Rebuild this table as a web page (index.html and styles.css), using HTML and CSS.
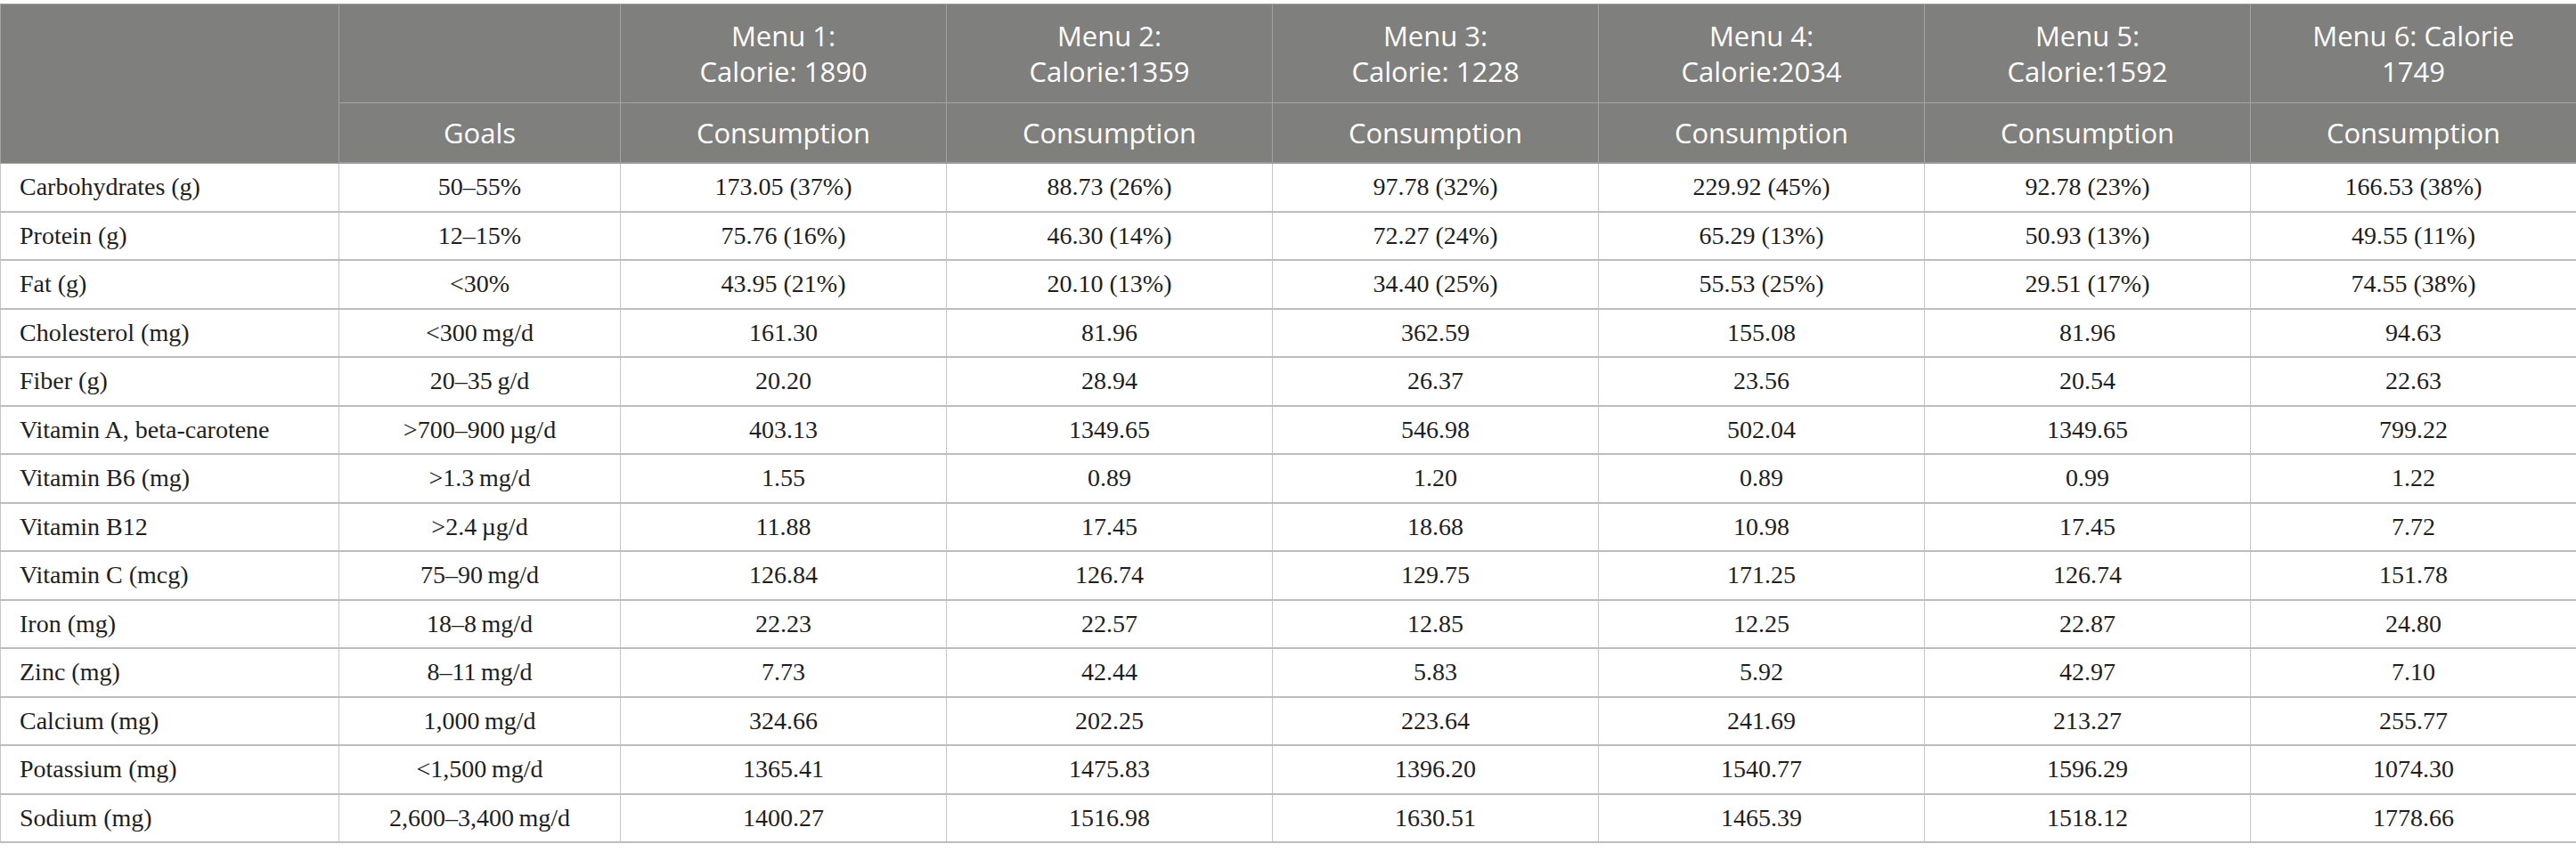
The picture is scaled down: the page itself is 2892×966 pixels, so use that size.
FILE: index.html
```html
<!DOCTYPE html>
<html lang="en">
<head>
  <meta charset="UTF-8">
  <title>Menu nutrient consumption</title>
  <link rel="stylesheet" href="styles.css">
</head>
<body>

  <table class="nutrients">
    <colgroup>
      <col class="col-name">
      <col class="col-goal">
      <col class="col-menu" span="6">
    </colgroup>
    <thead>
      <tr class="head-menus">
        <th rowspan="2"></th>
        <th></th>
        <th>Menu 1:<br>Calorie: 1890</th>
        <th>Menu 2:<br>Calorie:1359</th>
        <th>Menu 3:<br>Calorie: 1228</th>
        <th>Menu 4:<br>Calorie:2034</th>
        <th>Menu 5:<br>Calorie:1592</th>
        <th>Menu 6: Calorie<br>1749</th>
      </tr>
      <tr class="head-cols">
        <th>Goals</th>
        <th>Consumption</th>
        <th>Consumption</th>
        <th>Consumption</th>
        <th>Consumption</th>
        <th>Consumption</th>
        <th>Consumption</th>
      </tr>
    </thead>
    <tbody>
      <tr><td>Carbohydrates (g)</td><td>50–55%</td><td>173.05 (37%)</td><td>88.73 (26%)</td><td>97.78 (32%)</td><td>229.92 (45%)</td><td>92.78 (23%)</td><td>166.53 (38%)</td></tr>
      <tr><td>Protein (g)</td><td>12–15%</td><td>75.76 (16%)</td><td>46.30 (14%)</td><td>72.27 (24%)</td><td>65.29 (13%)</td><td>50.93 (13%)</td><td>49.55 (11%)</td></tr>
      <tr><td>Fat (g)</td><td>&lt;30%</td><td>43.95 (21%)</td><td>20.10 (13%)</td><td>34.40 (25%)</td><td>55.53 (25%)</td><td>29.51 (17%)</td><td>74.55 (38%)</td></tr>
      <tr><td>Cholesterol (mg)</td><td>&lt;300&#8201;mg/d</td><td>161.30</td><td>81.96</td><td>362.59</td><td>155.08</td><td>81.96</td><td>94.63</td></tr>
      <tr><td>Fiber (g)</td><td>20–35&#8201;g/d</td><td>20.20</td><td>28.94</td><td>26.37</td><td>23.56</td><td>20.54</td><td>22.63</td></tr>
      <tr><td>Vitamin A, beta-carotene</td><td>&gt;700–900&#8201;µg/d</td><td>403.13</td><td>1349.65</td><td>546.98</td><td>502.04</td><td>1349.65</td><td>799.22</td></tr>
      <tr><td>Vitamin B6 (mg)</td><td>&gt;1.3&#8201;mg/d</td><td>1.55</td><td>0.89</td><td>1.20</td><td>0.89</td><td>0.99</td><td>1.22</td></tr>
      <tr><td>Vitamin B12</td><td>&gt;2.4&#8201;µg/d</td><td>11.88</td><td>17.45</td><td>18.68</td><td>10.98</td><td>17.45</td><td>7.72</td></tr>
      <tr><td>Vitamin C (mcg)</td><td>75–90&#8201;mg/d</td><td>126.84</td><td>126.74</td><td>129.75</td><td>171.25</td><td>126.74</td><td>151.78</td></tr>
      <tr><td>Iron (mg)</td><td>18–8&#8201;mg/d</td><td>22.23</td><td>22.57</td><td>12.85</td><td>12.25</td><td>22.87</td><td>24.80</td></tr>
      <tr><td>Zinc (mg)</td><td>8–11&#8201;mg/d</td><td>7.73</td><td>42.44</td><td>5.83</td><td>5.92</td><td>42.97</td><td>7.10</td></tr>
      <tr><td>Calcium (mg)</td><td>1,000&#8201;mg/d</td><td>324.66</td><td>202.25</td><td>223.64</td><td>241.69</td><td>213.27</td><td>255.77</td></tr>
      <tr><td>Potassium (mg)</td><td>&lt;1,500&#8201;mg/d</td><td>1365.41</td><td>1475.83</td><td>1396.20</td><td>1540.77</td><td>1596.29</td><td>1074.30</td></tr>
      <tr><td>Sodium (mg)</td><td>2,600–3,400&#8201;mg/d</td><td>1400.27</td><td>1516.98</td><td>1630.51</td><td>1465.39</td><td>1518.12</td><td>1778.66</td></tr>
    </tbody>
  </table>

</body>
</html>
```
FILE: styles.css
```css
body {
  margin: 0;
  padding: 4px 0 0;
  background: #fff;
}

.nutrients {
  width: 100%;
  border-collapse: collapse;
  table-layout: fixed;
  border: 1px solid #c2c2c2;
}

.col-name {
  width: 380px;
}

.col-goal {
  width: 316px;
}

.col-menu {
  width: 366px;
}

.nutrients th {
  background: #7f807e;
  color: #fff;
  font-family: "Open Sans", Lato, sans-serif;
  font-weight: 400;
  font-size: 31px;
  line-height: 40px;
  text-align: center;
  vertical-align: middle;
  padding: 0 8px;
  border: 1px solid #a3a3a3;
}

.head-menus th {
  height: 110px;
}

.head-cols th {
  height: 66px;
  border-bottom: 2px solid #9c9c9c;
}

.nutrients td {
  font-family: "Liberation Serif", "Times New Roman", serif;
  font-size: 28px;
  color: #1e1e1e;
  text-align: center;
  vertical-align: middle;
  height: 52.5px;
  padding: 0 8px;
  border-left: 1px solid #c6c6c6;
  border-right: 1px solid #c6c6c6;
  border-bottom: 2px solid #bdbdbd;
}

.nutrients td:first-child {
  text-align: left;
  padding-left: 21px;
}
```
